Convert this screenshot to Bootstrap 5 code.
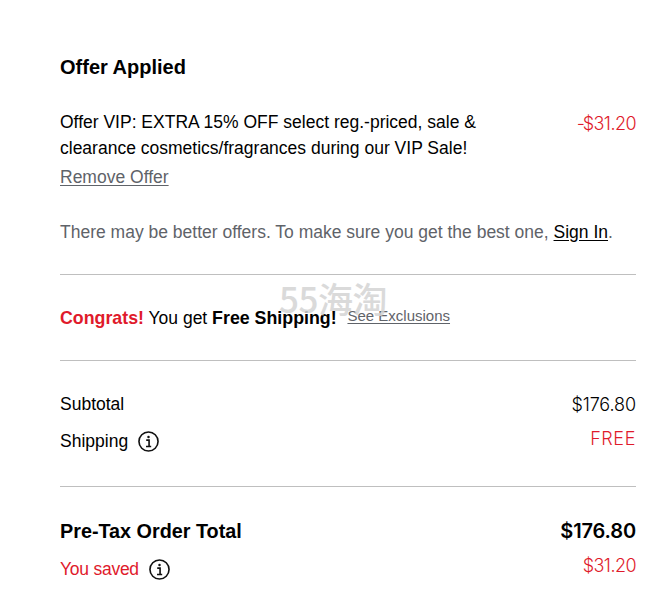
<!DOCTYPE html>
<html lang="en">
<head>
<meta charset="utf-8">
<title>Order summary</title>
<link href="https://cdn.jsdelivr.net/npm/bootstrap@5.3.0/dist/css/bootstrap.min.css" rel="stylesheet">
<style>
html,body{background:#fff;overflow:hidden}
body{font-family:"Liberation Sans",Arial,sans-serif;font-size:17.5px;line-height:29px;color:#000}
.summary-wrap{position:relative;width:665px;height:596px;padding:53px 29px 0 60px}
.offer-title{font-size:20px;font-weight:700;line-height:29px;margin-bottom:27px}
.offer-text{width:430px;line-height:26px}
.amount{font-family:Inter,"Liberation Sans",sans-serif;font-weight:300;font-size:18px;letter-spacing:-.1px}
.amount-free{letter-spacing:.6px}
.amount-tight{letter-spacing:-.55px}
.minus{letter-spacing:-2.2px}
.amount-bold{font-family:Inter,"Liberation Sans",sans-serif;font-weight:600;font-size:20px;letter-spacing:-.15px}
.sale-red{color:#e01a2b}
.muted-link{color:#5f6369;text-decoration:underline;text-underline-offset:2px}
.muted-text{color:#5f6369}
.remove-line{margin-top:2px;line-height:29px}
.better{margin-top:26px;line-height:29px}
.better a{color:#000;text-decoration:underline;text-underline-offset:2px}
.rule{height:1px;background:#bfbfbf;margin:0}
.rule-a{margin-top:27px}
.ship-line{height:85px;padding-top:29px;line-height:29px}
.ship-line strong{font-size:17.8px}
.excl{font-size:15px;margin-left:6px;position:relative;top:-3px}
.sum-rows{padding-top:29px;height:125px}
.sum-row{line-height:29px}
.sum-first{height:34px}
.sum-second{height:32px}
.total-row{padding-top:30px;line-height:29px;font-size:19.8px;font-weight:700}
.saved-row{margin-top:5px;height:33px;line-height:29px}
.saved-label{letter-spacing:-.25px}
.info-ic{width:21px;height:21px;margin-left:10px;flex:none}
.wm{position:absolute;left:279px;top:279px;font-family:"Noto Sans CJK SC","Liberation Sans",sans-serif;font-size:35px;font-weight:500;line-height:38px;color:#d4d4d4;letter-spacing:-.5px;opacity:.85;pointer-events:none;white-space:nowrap}
</style>
</head>
<body>
<div class="summary-wrap">
  <div class="offer-title">Offer Applied</div>
  <div class="d-flex justify-content-between align-items-start">
    <div class="offer-text">Offer VIP: EXTRA 15% OFF select reg.-priced, sale &amp; clearance cosmetics/fragrances during our VIP Sale!</div>
    <div class="amount amount-tight sale-red"><span class="minus">-</span>$31.20</div>
  </div>
  <div class="remove-line"><a href="#" class="muted-link">Remove Offer</a></div>
  <div class="better muted-text">There may be better offers. To make sure you get the best one, <a href="#">Sign In</a>.</div>
  <div class="rule rule-a"></div>
  <div class="ship-line"><strong class="sale-red">Congrats!</strong> You get <strong>Free Shipping!</strong> <a href="#" class="muted-link excl">See Exclusions</a></div>
  <div class="rule"></div>
  <div class="sum-rows">
    <div class="sum-row sum-first d-flex justify-content-between"><span>Subtotal</span><span class="amount">$176.80</span></div>
    <div class="sum-row sum-second d-flex justify-content-between">
      <span class="d-flex align-items-center align-self-end">Shipping
        <svg class="info-ic" viewBox="0 0 22 22" fill="none" stroke="#111"><circle cx="11" cy="11" r="10" stroke-width="1.7"/><circle cx="11" cy="6.3" r="1.3" fill="#111" stroke="none"/><path d="M8.6 9.6h3v6.4M8.4 16.2h5.4" stroke-width="1.7"/></svg>
      </span>
      <span class="amount amount-free sale-red">FREE</span>
    </div>
  </div>
  <div class="rule"></div>
  <div class="total-row d-flex justify-content-between"><span>Pre-Tax Order Total</span><span class="amount-bold">$176.80</span></div>
  <div class="saved-row d-flex justify-content-between">
    <span class="d-flex align-items-center align-self-end sale-red saved-label">You saved
      <svg class="info-ic" viewBox="0 0 22 22" fill="none" stroke="#111"><circle cx="11" cy="11" r="10" stroke-width="1.7"/><circle cx="11" cy="6.3" r="1.3" fill="#111" stroke="none"/><path d="M8.6 9.6h3v6.4M8.4 16.2h5.4" stroke-width="1.7"/></svg>
    </span>
    <span class="amount amount-tight sale-red">$31.20</span>
  </div>
  <div class="wm">55海淘</div>
</div>
<script src="https://cdn.jsdelivr.net/npm/bootstrap@5.3.0/dist/js/bootstrap.bundle.min.js"></script>
</body>
</html>
